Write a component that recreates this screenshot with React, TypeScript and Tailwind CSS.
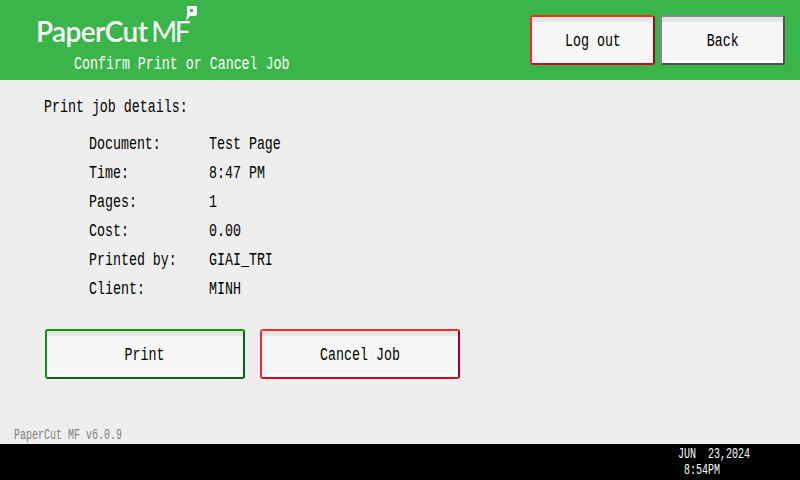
// the panel font is a tall narrow bitmap face, so Liberation Mono gets squeezed horizontally
const mono = "inline-block scale-x-[0.7] font-['Liberation_Mono',monospace] text-[19px] whitespace-pre"
const small = "inline-block origin-left scale-x-[0.714] font-['Liberation_Mono',monospace] text-[14px] whitespace-pre"

const rows = [
  ['Document:', 'Test Page'],
  ['Time:', '8:47 PM'],
  ['Pages:', '1'],
  ['Cost:', '0.00'],
  ['Printed by:', 'GIAI_TRI'],
  ['Client:', 'MINH'],
]

function Button({ label, className }: { label: string; className: string }) {
  return (
    <button className={`flex h-[50px] flex-col overflow-hidden rounded-[3px] border-2 bg-[#f7f7f7] text-black ${className}`}>
      <div className="h-[5px] w-full shrink-0 bg-[#e6e6e6]" />
      <div className="flex flex-1 items-center justify-center">
        <span className={`origin-center ${mono}`}>{label}</span>
      </div>
      <div className="h-[3px] w-full shrink-0 bg-white" />
    </button>
  )
}

const red = 'border-t-[#ff2a1a] border-l-[#ff2040] border-r-[#a00030] border-b-[#d8001c]'
const gray = 'border-t-[#808a88] border-l-[#808a88] border-r-[#505050] border-b-[#505050]'
const green = 'border-t-[#009c00] border-l-[#009c00] border-r-[#006c00] border-b-[#006c00]'

export default function App() {
  return (
    <div className="flex h-[480px] w-[800px] flex-col overflow-hidden bg-[#eeeeee]">
      <header className="flex h-[80px] shrink-0 items-start justify-between bg-[#39b54a] pl-[36px] pr-[15px] pt-[15px]">
        <div className="flex flex-col">
          <div className="relative flex h-[32px] items-center font-['Lato',sans-serif] text-[28px] leading-[32px] text-white">
            <span className="font-semibold tracking-[-0.6px]">PaperCut</span>
            <span className="ml-[4px] font-normal tracking-[-2.5px]">MF</span>
            <svg className="absolute left-[149px] top-[-9px]" width="13" height="15" viewBox="0 0 13 15">
              <path fill="#fff" fillRule="evenodd" d="M3 0h9v8q0 2-2 2H5L1 15l1-6q0-1 0-2V1q0-1 1-1zM5 3v3h3V3z" />
            </svg>
          </div>
          <div className="ml-[38px] mt-[4px] leading-[24px] text-white">
            <span className={`origin-left ${mono}`}>Confirm Print or Cancel Job</span>
          </div>
        </div>
        <div className="flex gap-[5px]">
          <Button label="Log out" className={`w-[125px] ${red}`} />
          <Button label="Back" className={`w-[125px] ${gray}`} />
        </div>
      </header>

      <main className="flex flex-1 flex-col pl-[44px] pt-[14px]">
        <div className="h-[24px] leading-[24px] text-black">
          <span className={`origin-left ${mono}`}>Print job details:</span>
        </div>
        <div className="ml-[45px] mt-[12px] flex flex-col">
          {rows.map(([label, value]) => (
            <div key={label} className="flex h-[29px] items-center text-black">
              <div className="w-[120px] shrink-0">
                <span className={`origin-left ${mono}`}>{label}</span>
              </div>
              <span className={`origin-left ${mono}`}>{value}</span>
            </div>
          ))}
        </div>
        <div className="ml-[1px] mt-[25px] flex gap-[15px]">
          <Button label="Print" className={`w-[200px] ${green}`} />
          <Button label="Cancel Job" className={`w-[200px] ${red}`} />
        </div>
        <div className="ml-[-30px] mt-auto pb-[1px] leading-[16px] text-[#808080]">
          <span className={small}>PaperCut MF v6.0.9</span>
        </div>
      </main>

      <footer className="flex h-[36px] shrink-0 flex-col bg-black pl-[678px] pt-[2px] leading-[16px] text-white">
        <span className={small}>JUN  23,2024</span>
        <span className={`ml-[6px] ${small}`}>8:54PM</span>
      </footer>
    </div>
  )
}
